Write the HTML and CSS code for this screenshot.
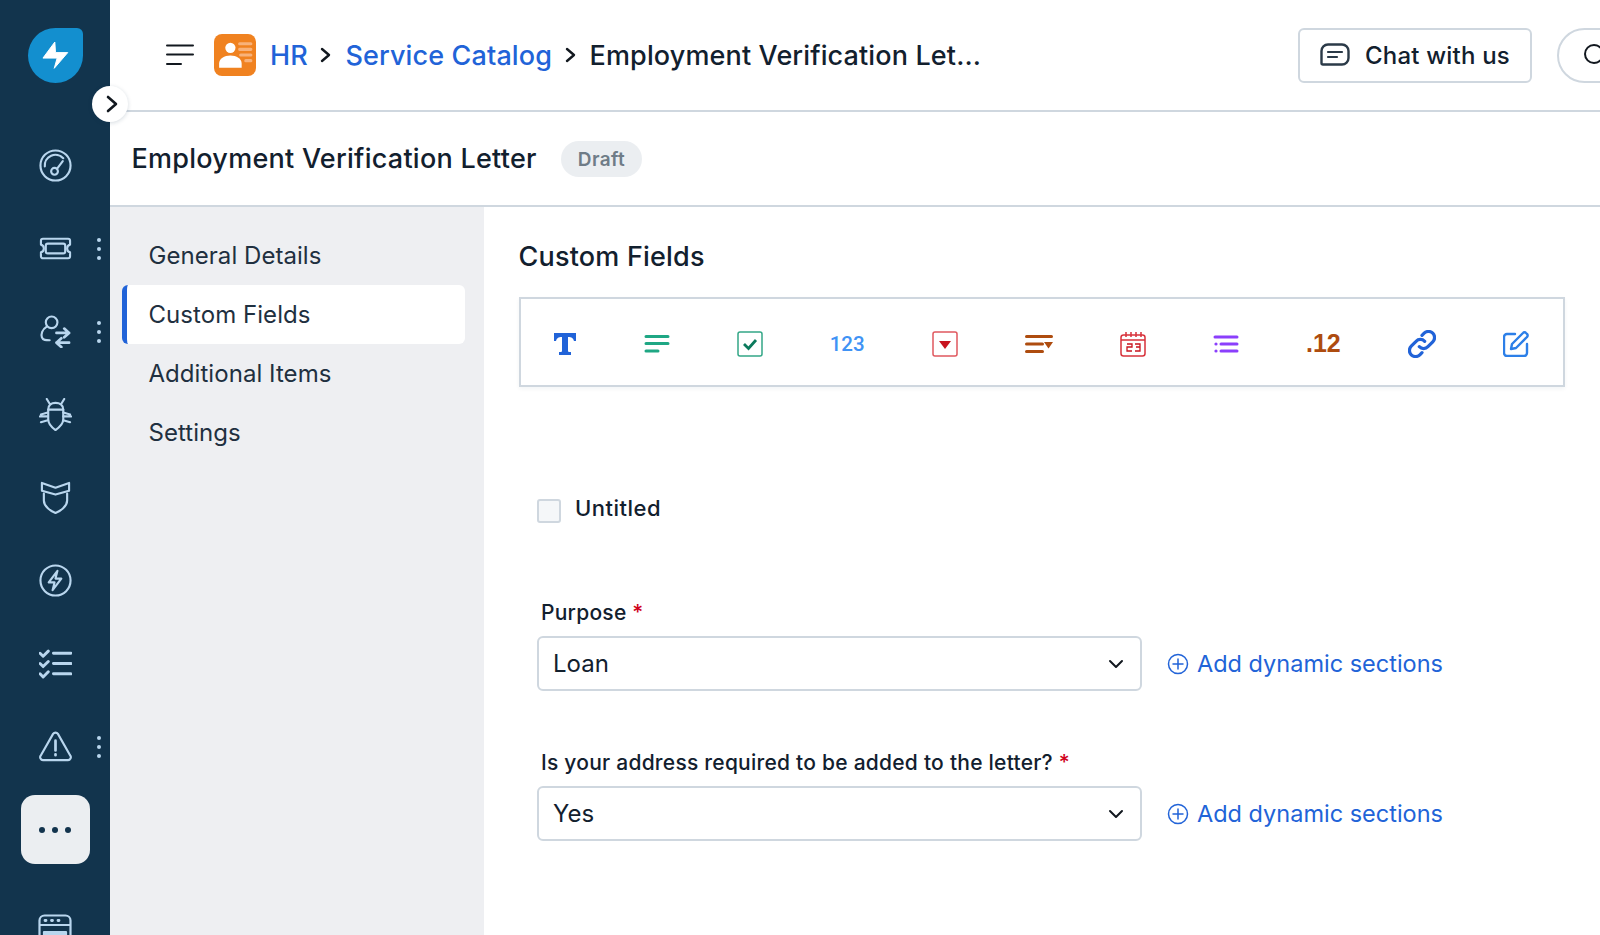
FILE: index.html
```html
<!DOCTYPE html>
<html lang="en">

<head>
  <meta charset="UTF-8">
  <meta name="viewport" content="width=device-width, initial-scale=1.0">
  <link rel="stylesheet" href="styles.css">
  <title>Employment Verification Letter</title>
</head>

<body>
  <aside class="sidebar">
    <div class="logo">
      <svg width="27" height="29" viewBox="-1 -1 28 30"><path d="M12.300 0 0 16.700h14.700l-3 10.600L25.700 11H13z" fill="#fff" stroke="#fff" stroke-width="1" stroke-linejoin="round"/></svg>
    </div>
    <div class="side_item">
      <svg class="side_icon" viewBox="0 0 34 34"><circle cx="17" cy="17" r="15.500"/><path d="M6 18A11 11 0 0 1 25 9.500"/><circle cx="16" cy="23" r="3.500"/><path d="m18.500 20.500 6-8"/></svg>
    </div>
    <div class="side_item">
      <svg class="side_icon" viewBox="0 0 34 24"><path d="M4 2h26a2 2 0 0 1 2 2v4c-4 1-4 7 0 8v4a2 2 0 0 1-2 2H4a2 2 0 0 1-2-2v-4c4-1 4-7 0-8V4a2 2 0 0 1 2-2z"/><rect x="7" y="7" width="20" height="10" rx="2"/></svg>
      <span class="kebab"><i></i><i></i><i></i></span>
    </div>
    <div class="side_item">
      <svg class="side_icon" viewBox="0 0 34 34"><circle cx="13" cy="7.500" r="6"/><path d="M8 12C3 15 2 20 3 23c1 3 4 3 8 3"/><path class="thick" d="M18 18.500h13M26 14l5 4.500-5 4.500M31 28.500H18M23 24l-5 4.500 5 4.500"/></svg>
      <span class="kebab"><i></i><i></i><i></i></span>
    </div>
    <div class="side_item">
      <svg class="side_icon" viewBox="0 0 34 34"><path d="M9.500 12H25v10c0 5-5 9-8 11-3-2-7.500-6-7.500-11z"/><path d="M9.500 12c0-5 3.500-7 7.500-7s8 2 8 7M8 1l3 5M26 1l-3 5M9 15l-7 2M9 19H1M9 23l-7 2M25 15l7 2M25 19h8M25 23l7 2"/></svg>
    </div>
    <div class="side_item">
      <svg class="side_icon" viewBox="0 0 34 34"><path d="M3 2 17 7l14-5v8L17 14 3 10z"/><path d="M5 13v7c0 6 7 11 12 13 5-2 12-7 12-13v-7"/></svg>
    </div>
    <div class="side_item">
      <svg class="side_icon" viewBox="0 0 34 34"><circle cx="17" cy="17" r="15.500"/><path d="M19 7 10 19h6l-2 8 9-12h-6z"/></svg>
    </div>
    <div class="side_item">
      <svg class="side_icon" viewBox="0 0 32 26"><path class="thick" d="m1 3 3 3 5-5M1 13l3 3 5-5M1 23l3 3 5-5"/><path class="thick" d="M14 3h17M14 13h17M14 23h17"/></svg>
    </div>
    <div class="side_item">
      <svg class="side_icon" viewBox="0 0 34 32"><path d="M14.500 3a3 3 0 0 1 5 0l12.500 22a3 3 0 0 1-2.500 5h-25A3 3 0 0 1 2 25z"/><path class="thick" d="M17 10v10M17 24v1"/></svg>
      <span class="kebab"><i></i><i></i><i></i></span>
    </div>
    <div class="side_item">
      <div class="more_btn"><i></i><i></i><i></i></div>
    </div>
    <div class="side_item side_last">
      <svg class="side_icon" viewBox="0 0 34 46"><rect x="1.500" y="1.500" width="31" height="40" rx="5"/><path d="M2 11h30"/><path class="thick" d="M7 6.500h1M13.500 6.500h1M20 6.500h1"/><rect class="solid" x="6" y="18" width="22" height="14"/></svg>
    </div>
  </aside>

  <button class="collapse_btn">
    <svg width="14" height="18" viewBox="0 0 14 18"><path d="m3 2 8 7-8 7" fill="none" stroke="#12181f" stroke-width="2.600" stroke-linecap="round" stroke-linejoin="round"/></svg>
  </button>

  <div class="main">
    <header class="topbar">
      <svg class="menu_icon" width="28" height="22" viewBox="0 0 28 22"><path d="M1 1.500h26M1 10.500h26M1 20h14" stroke="#12181f" stroke-width="2" fill="none" stroke-linecap="round"/></svg>
      <div class="app_icon">
        <svg width="42" height="42" viewBox="0 0 41 41">
          <circle cx="16" cy="13.500" r="5" fill="#fff"/>
          <path d="M5 33v-4c0-5 5-8 11-8s11 3 11 8v4z" fill="#fff"/>
          <path d="M25 9.500h11M25 15h11M26 20.500h10M31 26h5" stroke="#f8b27a" stroke-width="3" stroke-linecap="round"/>
        </svg>
      </div>
      <a class="crumb crumb_link">HR</a>
      <svg class="crumb_sep" width="12" height="16" viewBox="0 0 12 16"><path d="m2 2 7 6-7 6" fill="none" stroke="#12181f" stroke-width="2.400" stroke-linecap="round" stroke-linejoin="round"/></svg>
      <a class="crumb crumb_link">Service Catalog</a>
      <svg class="crumb_sep" width="12" height="16" viewBox="0 0 12 16"><path d="m2 2 7 6-7 6" fill="none" stroke="#12181f" stroke-width="2.400" stroke-linecap="round" stroke-linejoin="round"/></svg>
      <span class="crumb">Employment Verification Let...</span>
      <div class="topbar_right">
        <button class="chat_btn">
          <svg width="30" height="24" viewBox="0 0 30 24"><path d="M8 1.500h14a6.500 6.500 0 0 1 6.500 6.500v7a6.500 6.500 0 0 1-6.500 6.500H3a1.500 1.500 0 0 1-1.500-1.500V8A6.500 6.500 0 0 1 8 1.500z" fill="none" stroke="#2b3a48" stroke-width="2.400"/><path d="M8 9h14M8 14h9" stroke="#2b3a48" stroke-width="2.200" stroke-linecap="round"/></svg>
          Chat with us
        </button>
        <div class="search_pill">
          <svg width="24" height="24" viewBox="0 0 24 24"><circle cx="11" cy="11" r="9" fill="none" stroke="#12181f" stroke-width="2"/></svg>
        </div>
      </div>
    </header>

    <div class="title_row">
      <h1>Employment Verification Letter</h1>
      <span class="badge">Draft</span>
    </div>

    <div class="body_row">
      <nav class="left_nav">
        <div class="nav_item">General Details</div>
        <div class="nav_item active">Custom Fields</div>
        <div class="nav_item">Additional Items</div>
        <div class="nav_item">Settings</div>
      </nav>

      <section class="content">
        <h2>Custom Fields</h2>

        <div class="field_types">
          <svg width="24" height="24" viewBox="0 0 24 24"><path d="M1 1h22v8h-2c-1-3-2-4-6-4v14c0 1 1 1 3 1v3H6v-3c2 0 3 0 3-1V5C5 5 4 6 3 9H1z" fill="#2163d8"/></svg>
          <svg width="26" height="20" viewBox="0 0 26 20"><path d="M2 2.500h22M2 9.500h22M2 17h12" stroke="#1fa784" stroke-width="3" stroke-linecap="round"/></svg>
          <svg width="26" height="26" viewBox="0 0 26 26"><rect x="1" y="1" width="24" height="24" rx="2" fill="none" stroke="#33a787" stroke-width="1.500"/><path d="m7 13 4.500 4.500L19 9" fill="none" stroke="#0b7a5c" stroke-width="2.800"/></svg>
          <span class="type_num type_123">123</span>
          <svg width="26" height="26" viewBox="0 0 26 26"><rect x="1" y="1" width="24" height="24" rx="2" fill="none" stroke="#e0585f" stroke-width="1.500"/><path d="M7 10h12l-6 8z" fill="#c8141f"/></svg>
          <svg width="28" height="20" viewBox="0 0 28 20"><path d="M1.500 2.500h25M1.500 10h16M1.500 17.500h16" stroke="#ae4c0f" stroke-width="3" stroke-linecap="round"/><path d="M19 8h9l-4.500 6.500z" fill="#ae4c0f"/></svg>
          <svg width="26" height="26" viewBox="0 0 26 26"><rect x="1" y="4" width="24" height="21" rx="2.500" fill="none" stroke="#d8323b" stroke-width="1.500"/><path d="M1 9h24M6 1v5M11 1v5M16 1v5M21 1v5" stroke="#d8323b" stroke-width="1.500" fill="none"/><path d="M7 13h5v3H7v4h5M15 13h5v3h-4 4v4h-5" stroke="#c8141f" stroke-width="1.300" fill="none"/></svg>
          <svg width="26" height="20" viewBox="0 0 26 20"><path d="M2 3h22M8 10h16M8 17h16" stroke="#8b3ffc" stroke-width="3" stroke-linecap="round"/><circle cx="3" cy="10" r="1.600" fill="#8b3ffc"/><circle cx="3" cy="17" r="1.600" fill="#8b3ffc"/></svg>
          <span class="type_num type_dec">.12</span>
          <svg width="28" height="28" viewBox="0 0 26 26"><path d="M10.500 15.500a5.500 5.500 0 0 0 8 0l4.500-4.500a5.500 5.500 0 0 0-8-8l-2 2" fill="none" stroke="#2163d8" stroke-width="3" stroke-linecap="round"/><path d="M15.500 10.500a5.500 5.500 0 0 0-8 0L3 15a5.500 5.500 0 0 0 8 8l2-2" fill="none" stroke="#2163d8" stroke-width="3" stroke-linecap="round"/></svg>
          <svg width="26" height="26" viewBox="0 0 26 26"><path d="M12 3H4a3 3 0 0 0-3 3v16a3 3 0 0 0 3 3h17a3 3 0 0 0 3-3v-9" fill="none" stroke="#2c7fe8" stroke-width="2.400" stroke-linecap="round"/><path d="M8 18l1-5L20 2a2 2 0 0 1 3 0l1 1a2 2 0 0 1 0 3L13 17z" fill="none" stroke="#2c7fe8" stroke-width="2.400" stroke-linejoin="round"/></svg>
        </div>

        <div class="form_area">
          <label class="check_row">
            <span class="check_box"></span>
            <span>Untitled</span>
          </label>

          <div class="form_field">
            <div class="field_label">Purpose <span class="req">*</span></div>
            <div class="field_row">
              <div class="fake_select">
                Loan
                <svg width="16" height="10" viewBox="0 0 16 10"><path d="m2 2 6 6 6-6" fill="none" stroke="#12181f" stroke-width="2" stroke-linecap="round" stroke-linejoin="round"/></svg>
              </div>
              <a class="add_link">
                <svg width="22" height="22" viewBox="0 0 22 22"><circle cx="11" cy="11" r="9.500" fill="none" stroke="#2163d8" stroke-width="1.500"/><path d="M11 6v10M6 11h10" stroke="#2163d8" stroke-width="1.500" stroke-linecap="round"/></svg>
                Add dynamic sections
              </a>
            </div>
          </div>

          <div class="form_field">
            <div class="field_label">Is your address required to be added to the letter? <span class="req">*</span></div>
            <div class="field_row">
              <div class="fake_select">
                Yes
                <svg width="16" height="10" viewBox="0 0 16 10"><path d="m2 2 6 6 6-6" fill="none" stroke="#12181f" stroke-width="2" stroke-linecap="round" stroke-linejoin="round"/></svg>
              </div>
              <a class="add_link">
                <svg width="22" height="22" viewBox="0 0 22 22"><circle cx="11" cy="11" r="9.500" fill="none" stroke="#2163d8" stroke-width="1.500"/><path d="M11 6v10M6 11h10" stroke="#2163d8" stroke-width="1.500" stroke-linecap="round"/></svg>
                Add dynamic sections
              </a>
            </div>
          </div>
        </div>
      </section>
    </div>
  </div>
</body>

</html>
```

FILE: styles.css
```css
* {
  box-sizing: border-box;
}

body {
  margin: 0;
  padding: 0;
  height: 935px;
  display: flex;
  overflow: hidden;
  position: relative;
  font-family: Inter, "Liberation Sans", sans-serif;
  color: #12202e;
  background: #fff;
}

/* left dark bar */
.sidebar {
  width: 110px;
  height: 935px;
  flex: none;
  background: #12344d;
  overflow: hidden;
  padding-top: 28px;
}

.logo {
  width: 55px;
  height: 55px;
  margin: 0 auto 41px;
  border-radius: 50% 6px 50% 50%;
  background: #138fcf;
  display: flex;
  align-items: center;
  justify-content: center;
}

.side_item {
  height: 83px;
  display: flex;
  align-items: center;
  justify-content: center;
  position: relative;
}

.side_icon {
  width: 33px;
  height: 33px;
  fill: none;
  stroke: #b9d6ee;
  stroke-width: 2.200;
  stroke-linecap: round;
  stroke-linejoin: round;
}

.side_icon .thick {
  stroke-width: 2.800;
}

.side_icon .solid {
  fill: #b9d6ee;
}

.side_last {
  align-items: flex-start;
  padding-top: 43px;
}

.side_last .side_icon {
  width: 34px;
  height: 46px;
}

.kebab {
  position: absolute;
  left: 97px;
  top: 50%;
  transform: translateY(-50%);
  display: flex;
  flex-direction: column;
  gap: 5px;
}

.kebab i {
  width: 4px;
  height: 4px;
  border-radius: 50%;
  background: #b9d6ee;
}

.more_btn {
  width: 69px;
  height: 69px;
  border-radius: 14px;
  background: #ebeef1;
  display: flex;
  align-items: center;
  justify-content: center;
  gap: 7px;
}

.more_btn i {
  width: 6px;
  height: 6px;
  border-radius: 50%;
  background: #12344d;
}

.collapse_btn {
  position: absolute;
  left: 92px;
  top: 86px;
  width: 36px;
  height: 36px;
  padding: 0 0 0 3px;
  border: 0;
  border-radius: 50%;
  background: #fff;
  box-shadow: 0 1px 4px rgba(18, 52, 77, .18);
  display: flex;
  align-items: center;
  justify-content: center;
  z-index: 2;
}

.main {
  flex: 1;
  min-width: 0;
  display: flex;
  flex-direction: column;
}

/* top header */
.topbar {
  height: 112px;
  flex: none;
  display: flex;
  align-items: center;
  padding-left: 56px;
  border-bottom: 2px solid #cfd7df;
  overflow: hidden;
}

.menu_icon {
  margin-right: 20px;
}

.app_icon {
  width: 42px;
  height: 42px;
  border-radius: 8px;
  background: #f08220;
  margin-right: 14px;
}

.crumb {
  font-size: 27px;
  font-weight: 500;
  letter-spacing: .13px;
  white-space: nowrap;
}

.crumb_link {
  color: #2163d8;
}

.crumb_sep {
  margin: 0 13px 0 12.500px;
}

.topbar_right {
  margin-left: auto;
  display: flex;
  gap: 25px;
  margin-right: -37px;
}

.chat_btn {
  width: 234px;
  height: 55px;
  display: flex;
  align-items: center;
  justify-content: center;
  gap: 15px;
  border: 2px solid #cfd7df;
  border-radius: 6px;
  background: #fff;
  font-family: inherit;
  font-size: 24px;
  font-weight: 500;
  letter-spacing: .2px;
  color: #12202e;
}

.search_pill {
  width: 80px;
  height: 55px;
  border: 2px solid #cfd7df;
  border-radius: 28px;
  padding: 13px 0 0 24px;
}

.title_row {
  height: 95px;
  flex: none;
  display: flex;
  align-items: center;
  padding-left: 21.500px;
  border-bottom: 2px solid #cfd7df;
}

h1 {
  margin: 0;
  font-size: 27px;
  font-weight: 500;
  letter-spacing: .26px;
}

.badge {
  margin-left: 24px;
  height: 36px;
  padding: 0 17px;
  border-radius: 18px;
  background: #ebeef1;
  color: #6f7c87;
  font-size: 19px;
  font-weight: 600;
  letter-spacing: .4px;
  line-height: 38px;
}

.body_row {
  flex: 1;
  display: flex;
  min-height: 0;
}

.left_nav {
  width: 374px;
  flex: none;
  background: #eeeff2;
  padding: 19px 19px 0 12px;
}

.nav_item {
  height: 59px;
  padding-left: 26.500px;
  font-size: 24px;
  letter-spacing: .05px;
  line-height: 59px;
  color: #1f3040;
}

.nav_item.active {
  background: #fff;
  border-left: 5px solid #2163d8;
  border-radius: 6px;
  padding-left: 21.500px;
}

.content {
  flex: 1;
  padding: 30px 35px 0 34.500px;
  min-width: 0;
}

h2 {
  margin: 0 0 20px;
  font-size: 27px;
  line-height: 40px;
  font-weight: 500;
  letter-spacing: .2px;
}

.field_types {
  height: 90px;
  border: 2px solid #cfd7df;
  display: flex;
  align-items: center;
  justify-content: space-between;
  padding: 3px 34px 0 32px;
  box-shadow: 0 2px 4px rgba(18, 52, 77, .05);
}

.type_num {
  font-family: Roboto, "Liberation Sans", sans-serif;
}

.type_123 {
  font-size: 20.500px;
  font-weight: 500;
  color: #3f93f5;
}

.type_dec {
  font-family: "Liberation Sans", sans-serif;
  font-size: 25px;
  font-weight: 700;
  color: #ae4c0f;
}

.form_area {
  padding: 108px 0 0 18.500px;
}

.check_row {
  display: flex;
  gap: 14px;
  font-size: 22px;
  font-weight: 500;
  letter-spacing: .5px;
  line-height: 26px;
  margin-bottom: 77px;
}

.check_box {
  width: 24px;
  height: 24px;
  margin-top: 4px;
  border: 2px solid #cfd7df;
  border-radius: 3px;
  background: #f5f7f9;
}

.form_field {
  margin-bottom: 59px;
}

.field_label {
  padding-left: 4px;
  margin-bottom: 10px;
  font-size: 21px;
  letter-spacing: .24px;
  line-height: 26px;
  font-weight: 500;
}

.req {
  color: #d0021b;
}

.field_row {
  display: flex;
  align-items: center;
  gap: 25px;
}

.fake_select {
  width: 605px;
  height: 55px;
  display: flex;
  align-items: center;
  justify-content: space-between;
  padding: 0 16px 0 14px;
  border: 2px solid #cfd7df;
  border-radius: 6px;
  font-size: 24px;
}

.add_link {
  display: flex;
  align-items: center;
  gap: 8px;
  color: #2163d8;
  font-size: 23.500px;
}
```
